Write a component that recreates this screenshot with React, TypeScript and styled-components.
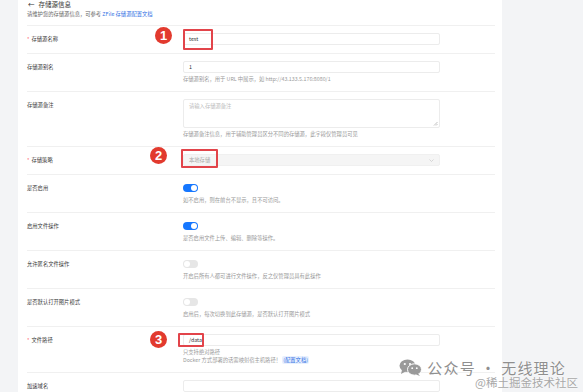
import React, { FC } from 'react';
import styled, { createGlobalStyle } from 'styled-components';

const GlobalStyle = createGlobalStyle`
    html, body {
        margin: 0;
        padding: 0;
    }
    body {
        background: #f3f4f6;
        font-family: "Noto Sans CJK SC", "Noto Sans", sans-serif;
        overflow: hidden;
    }
`;

const Page = styled.div`
    position: relative;
    width: 583px;
    height: 392px;
    overflow: hidden;
    display: flex;
`;

const Card = styled.section`
    margin-left: 18px;
    width: 484px;
    height: 100%;
    background: #fff;
    padding: 0 7px 0 9px;
    box-sizing: border-box;
`;

const Title = styled.div`
    display: flex;
    align-items: center;
    gap: 4px;
    font-size: 6.5px;
    line-height: 9px;
    color: #333;
    padding-left: 1px;
`;

const Sub = styled.div`
    margin-top: 1px;
    margin-bottom: 6px;
    font-size: 5.3px;
    line-height: 9px;
    color: #666;
`;

const Link = styled.span`
    color: #2f6fe4;
`;

const Row = styled.div`
    display: flex;
    border-top: 1px solid #f0f0f0;
    padding: 7px 0 8px;
`;

const Label = styled.div`
    width: 156px;
    flex-shrink: 0;
    font-size: 5.3px;
    line-height: 12px;
    color: #3a3a3a;
`;

const Star = styled.span`
    color: #ff4d4f;
    margin-right: 2px;
`;

const Control = styled.div`
    position: relative;
    width: 257px;
`;

const Input = styled.div<{ $disabled?: boolean }>`
    height: 12px;
    box-sizing: border-box;
    border: 1px solid ${p => (p.$disabled ? '#f0f0f0' : '#ececec')};
    border-radius: 2px;
    background: ${p => (p.$disabled ? '#f5f5f5' : '#fff')};
    padding: 0 5px;
    font-size: 5.3px;
    line-height: 10px;
    color: ${p => (p.$disabled ? '#aaa' : '#333')};
    display: flex;
    align-items: center;
    justify-content: space-between;
`;

const TextArea = styled.div`
    position: relative;
    height: 29px;
    box-sizing: border-box;
    border: 1px solid #ececec;
    border-radius: 2px;
    padding: 2px 5px;
    font-size: 5.3px;
    line-height: 8px;
    color: #bbb;
`;

const Grip = styled.svg`
    position: absolute;
    right: 1px;
    bottom: 1px;
`;

const Help = styled.div<{ $first?: boolean }>`
    margin-top: ${p => (p.$first ? '2px' : '0')};
    font-size: 5.3px;
    line-height: 8px;
    color: #999;
`;

const DocTag = styled.span`
    color: #2f6fe4;
    background: #e8f0fe;
    border-radius: 2px;
    padding: 0 1px;
`;

const SwitchWrap = styled.div`
    height: 12px;
    display: flex;
    align-items: center;
`;

const Switch = styled.div<{ $on: boolean }>`
    position: relative;
    width: 15px;
    height: 8px;
    border-radius: 4px;
    background: ${p => (p.$on ? '#1677ff' : '#e6e6e6')};
    &::after {
        content: '';
        position: absolute;
        top: 1px;
        left: ${p => (p.$on ? '8px' : '1px')};
        width: 6px;
        height: 6px;
        border-radius: 50%;
        background: #fff;
    }
`;

const Badge = styled.div<{ $x: number; $y: number }>`
    position: absolute;
    left: ${p => p.$x}px;
    top: ${p => p.$y}px;
    width: 17px;
    height: 17px;
    border-radius: 50%;
    background: #e23a2e;
    color: #fff;
    font-family: "Liberation Sans", Arial, sans-serif;
    font-weight: bold;
    font-size: 13px;
    line-height: 17px;
    text-align: center;
`;

const Mark = styled.div<{ $x: number; $y: number; $w: number; $h: number }>`
    position: absolute;
    left: ${p => p.$x}px;
    top: ${p => p.$y}px;
    width: ${p => p.$w}px;
    height: ${p => p.$h}px;
    border: 2px solid #e2444a;
    border-radius: 1px;
    box-sizing: border-box;
`;

const Watermark = styled.div`
    position: absolute;
    right: 5px;
    bottom: 4px;
    display: flex;
    flex-direction: column;
    align-items: flex-end;
    pointer-events: none;
`;

const WmTop = styled.div`
    display: flex;
    align-items: center;
    gap: 5px;
    margin-right: 12px;
    font-size: 15px;
    line-height: 15px;
    letter-spacing: 1.2px;
    color: #8f8f8f;
    text-shadow: 0 0 2px #fff, 0 0 1px #fff;
`;

const WmBottom = styled.div`
    font-size: 11.5px;
    line-height: 12px;
    color: #a8a8a8;
    text-shadow: 0 0 2px #fff;
`;

const Chevron: FC = () => (
    <svg width="5" height="3" viewBox="0 0 5 3">
        <path d="M0.5 0.5 L2.5 2.5 L4.5 0.5" stroke="#c8c8c8" strokeWidth="0.7" fill="none" />
    </svg>
);

const WeChat: FC = () => (
    <svg width="23" height="17" viewBox="0 0 23 17">
        <ellipse cx="8.5" cy="6.8" rx="8" ry="6.3" fill="#9a9a9a" />
        <path d="M3 11 L2 15 L6.5 12.5 Z" fill="#9a9a9a" />
        <circle cx="5.8" cy="5" r="1.1" fill="#fff" />
        <circle cx="11" cy="5" r="1.1" fill="#fff" />
        <ellipse cx="15.5" cy="10.5" rx="7" ry="5.7" fill="#9a9a9a" stroke="#fff" strokeWidth="1" />
        <path d="M19 14.5 L21 17 L17 15.6 Z" fill="#9a9a9a" />
        <circle cx="13.2" cy="9.2" r="0.9" fill="#fff" />
        <circle cx="17.8" cy="9.2" r="0.9" fill="#fff" />
    </svg>
);

type Item = {
    label: string;
    required?: boolean;
    kind: 'input' | 'textarea' | 'select' | 'switch';
    value?: string;
    on?: boolean;
    help?: React.ReactNode[];
    note?: { n: number; bx: number; by: number; mx: number; my: number; mw: number; mh: number };
};

const items: Item[] = [
    {
        label: '存储源名称', required: true, kind: 'input', value: 'test',
        note: { n: 1, bx: -28, by: -6, mx: 0, my: -4, mw: 30, mh: 21 },
    },
    {
        label: '存储源别名', kind: 'input', value: '1',
        help: ['存储源别名，用于 URL 中展示，如 http://43.133.5.176:8080/1'],
    },
    {
        label: '存储源备注', kind: 'textarea', value: '请输入存储源备注',
        help: ['存储源备注信息，用于辅助管理员区分不同的存储源，此字段仅管理员可见'],
    },
    {
        label: '存储策略', required: true, kind: 'select', value: '本地存储',
        note: { n: 2, bx: -33, by: -7, mx: -2, my: -5, mw: 37, mh: 19 },
    },
    { label: '是否启用', kind: 'switch', on: true, help: ['如不启用，则在前台不显示，且不可访问。'] },
    { label: '启用文件操作', kind: 'switch', on: true, help: ['是否启用文件上传、编辑、删除等操作。'] },
    { label: '允许匿名文件操作', kind: 'switch', on: false, help: ['开启后所有人都可进行文件操作，反之仅管理员具有此操作'] },
    { label: '是否默认打开图片模式', kind: 'switch', on: false, help: ['启用后，每次切换到此存储源，是否默认打开图片模式'] },
    {
        label: '文件路径', required: true, kind: 'input', value: '/data',
        help: [
            '只支持绝对路径',
            <>Docker 方式部署的话需映射宿主机路径！ <DocTag>(配置文档)</DocTag></>,
        ],
        note: { n: 3, bx: -33, by: -3, mx: -5, my: -1, mw: 26, mh: 14 },
    },
    { label: '加速域名', kind: 'input', value: '' },
];

const Field: FC<{ item: Item }> = ({ item }) => (
    <Row>
        <Label>
            {item.required && <Star>*</Star>}
            {item.label}
        </Label>
        <Control>
            {item.kind === 'input' && <Input>{item.value}</Input>}
            {item.kind === 'select' && (
                <Input $disabled>
                    {item.value}
                    <Chevron />
                </Input>
            )}
            {item.kind === 'textarea' && (
                <TextArea>
                    {item.value}
                    <Grip width="5" height="5" viewBox="0 0 5 5">
                        <path d="M4.5 1 L1 4.5 M4.5 3 L3 4.5" stroke="#999" strokeWidth="0.6" />
                    </Grip>
                </TextArea>
            )}
            {item.kind === 'switch' && (
                <SwitchWrap>
                    <Switch $on={!!item.on} />
                </SwitchWrap>
            )}
            {item.help && item.help.map((h, i) => <Help key={i} $first={i === 0}>{h}</Help>)}
            {item.note && (
                <>
                    <Mark $x={item.note.mx} $y={item.note.my} $w={item.note.mw} $h={item.note.mh} />
                    <Badge $x={item.note.bx} $y={item.note.by}>{item.note.n}</Badge>
                </>
            )}
        </Control>
    </Row>
);

const App: FC = () => {
    return (
        <Page>
            <GlobalStyle />
            <Card>
                <Title>
                    <span>←</span>
                    <span>存储源信息</span>
                </Title>
                <Sub>
                    请维护您的存储源信息，可参考 <Link>ZFile 存储源配置文档</Link>
                </Sub>
                {items.map(it => (
                    <Field key={it.label} item={it} />
                ))}
            </Card>
            <Watermark>
                <WmTop>
                    <WeChat />
                    <span>公众号 · 无线理论</span>
                </WmTop>
                <WmBottom>@稀土掘金技术社区</WmBottom>
            </Watermark>
        </Page>
    );
};

export default App;
